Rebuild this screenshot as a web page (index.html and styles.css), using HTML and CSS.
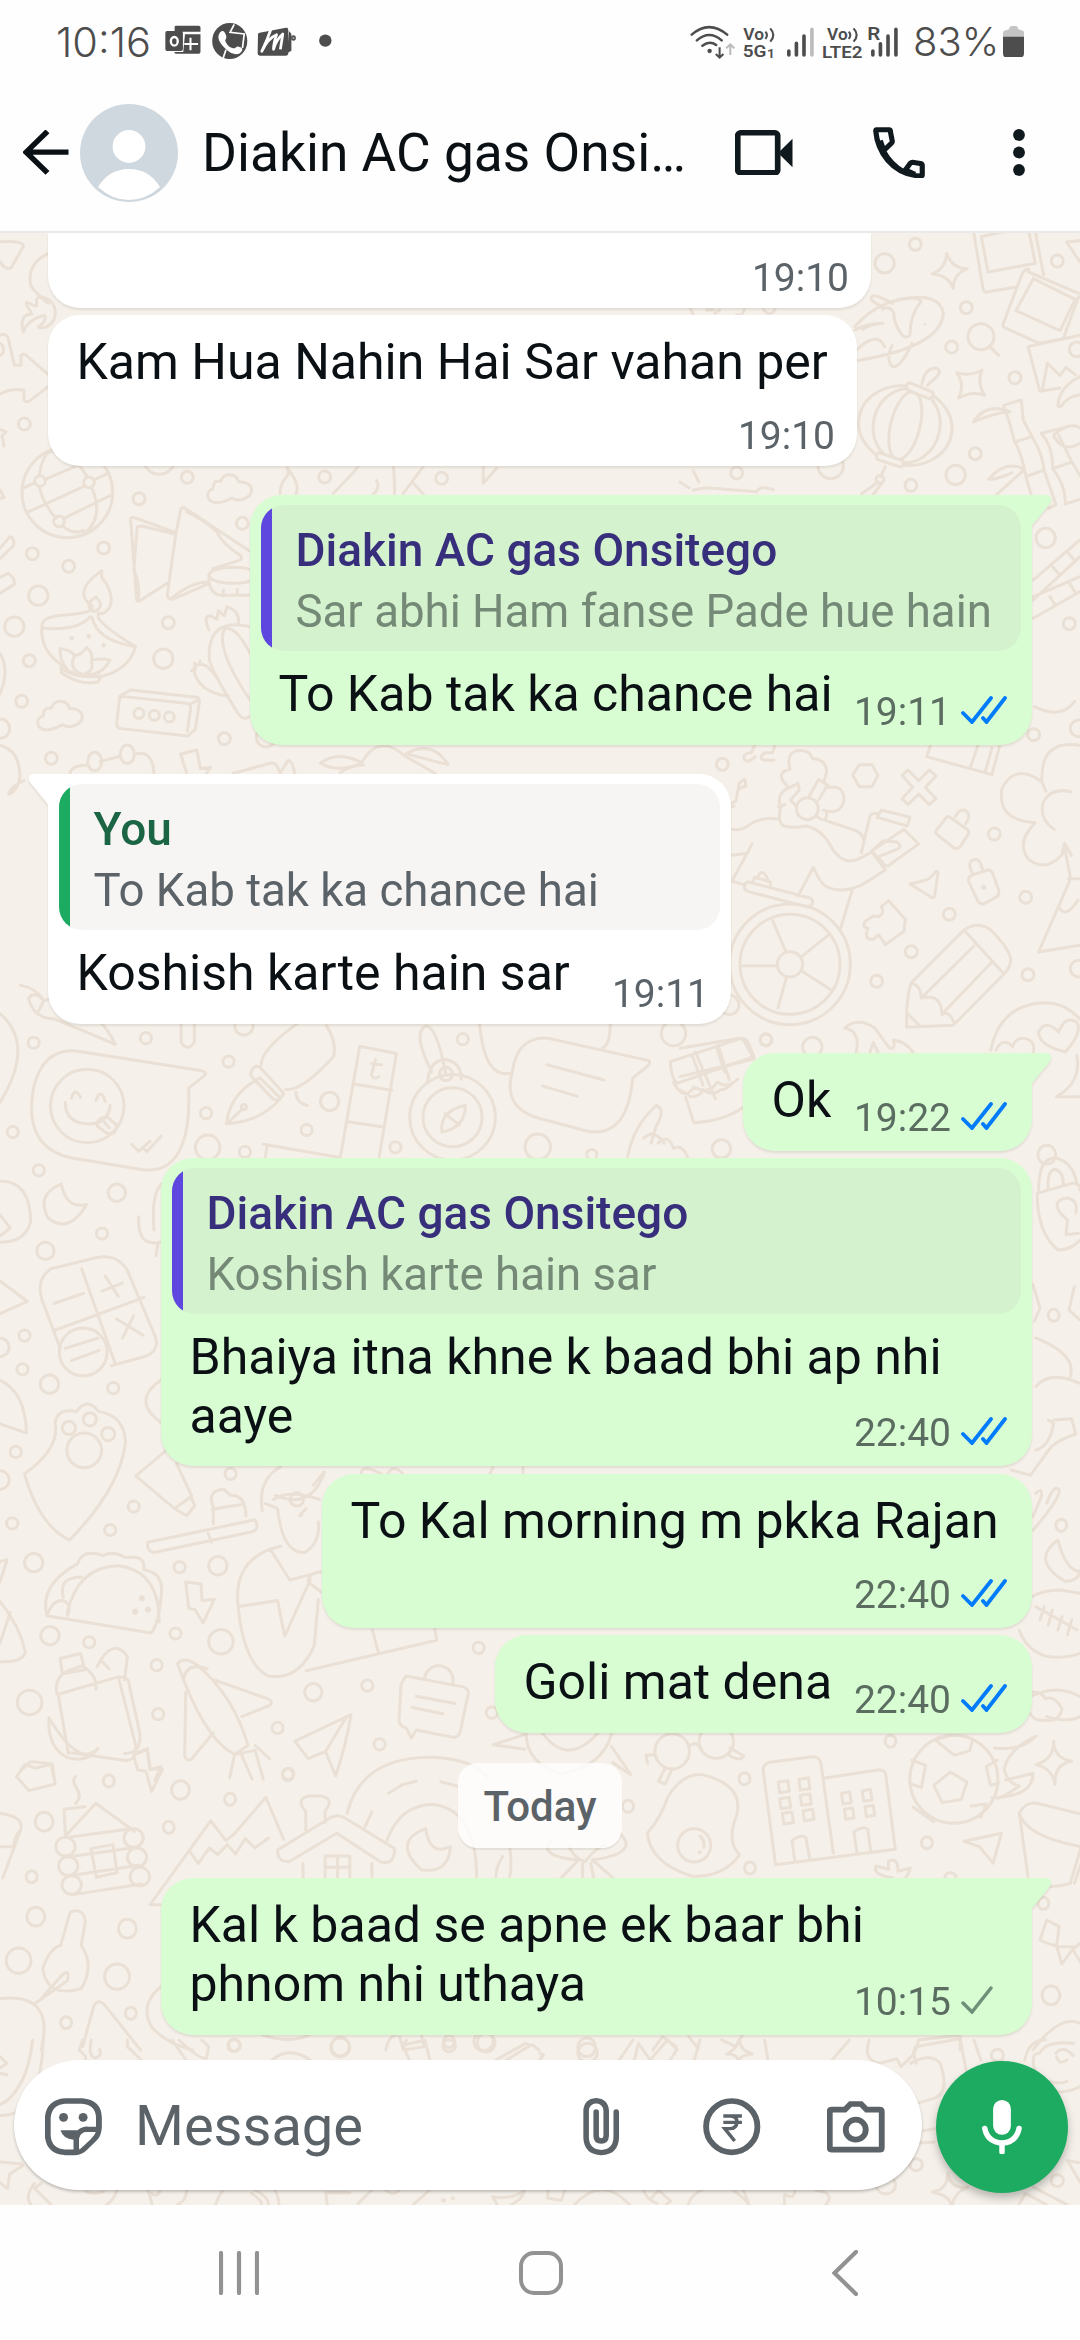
FILE: index.html
```html
<!DOCTYPE html>
<html lang="en">
<head>
<meta charset="utf-8">
<title>Diakin AC gas Onsitego</title>
<link rel="stylesheet" href="styles.css">
</head>
<body>
<svg class="defs" width="0" height="0">
  <symbol id="read" viewBox="0 0 46 28"><path d="M2 17l9 9L30 2M22 22l3.500 4L44 2" fill="none" stroke="#007bfc" stroke-width="3.800" stroke-linecap="round"/></symbol>
  <symbol id="sent" viewBox="0 0 46 28"><path d="M2 17l9 9L30 2" fill="none" stroke="#6f8f78" stroke-width="3.500" stroke-linecap="round"/></symbol>
</svg>
<div class="status">
  <span class="clock">10:16</span>
  <svg class="notif" viewBox="478 70 484 110" preserveAspectRatio="none" fill="#4d4d4d">
    <path d="M506 82q0-4 4-4h66q5 0 5 5v13h-75zM536 104h45v52q0 6-5 6h-66q-5 0-5-5h26zM484 94h40q6 0 6 6v48q0 6-6 6h-40q-5 0-5-6v-48q0-6 5-6z"/>
    <g fill="none" stroke="#fff" stroke-width="7"><ellipse cx="505" cy="125" rx="10" ry="13"/><path d="M552 114v38M534 133h40" stroke-width="6"/></g>
    <ellipse cx="666" cy="124" rx="51" ry="54"/>
    <path d="M638 98c8-8 12-4 17 8 4 11-4 13-1 20 5 12 12 17 22 20 7 2 8-7 16-5 14 4 12 9 7 16-8 11-28 8-44-8-20-20-28-36-17-51z" fill="#fff"/>
    <path d="M679 74l-12 24 41 5-5 42M655 150l-8 25" fill="none" stroke="#fff" stroke-width="5"/>
    <path d="M748 104q0-5 5-5l76-15q7-1 7 6v70q0 8-8 8h-73q-8 0-8-8zM838 94l7 9v50l-11 7z"/>
    <ellipse cx="851" cy="115" rx="7" ry="8"/><circle cx="851" cy="115" r="3" fill="#aaa"/>
    <path d="M788 82q-12 36-29 73 18-40 43-50-9 26-9 44 8-29 27-46l-7 46" fill="none" stroke="#fff" stroke-width="8" stroke-linejoin="round"/>
    <ellipse cx="943.500" cy="123" rx="18" ry="18.500"/>
  </svg>
  <svg class="signals" viewBox="436 70 606 108" preserveAspectRatio="none" fill="#4d4d4d">
    <g fill="none" stroke="#4d4d4d" stroke-width="7.500" stroke-linecap="round"><path d="M441 102q50-45 103 0M456 119q36-32 72 0M472 135q21-16 40-2"/></g>
    <circle cx="493" cy="151" r="6.500"/>
    <path d="M522 140v28M511 160l11 11 11-11" fill="none" stroke="#4d4d4d" stroke-width="6"/>
    <path d="M553 163v-28M541 143l12-12 12 12" fill="none" stroke="#bbb" stroke-width="6"/>
    <g font-family="Roboto" font-weight="600">
      <text x="591" y="119" font-size="52" textLength="60" lengthAdjust="spacingAndGlyphs">Vo</text>
      <text x="589" y="170" font-size="51" textLength="69" lengthAdjust="spacingAndGlyphs">5G</text>
      <text x="660" y="171" font-size="37" textLength="23" lengthAdjust="spacingAndGlyphs">1</text>
      <text x="834" y="119" font-size="52" textLength="60" lengthAdjust="spacingAndGlyphs">Vo</text>
      <text x="819" y="171" font-size="52" textLength="118" lengthAdjust="spacingAndGlyphs">LTE2</text>
      <text x="951" y="119" font-size="54" textLength="38" lengthAdjust="spacingAndGlyphs">R</text>
    </g>
    <path d="M655 93q9 10 0 22M669 83q18 20 0 40M897 93q9 10 0 22M911 83q18 20 0 40" fill="none" stroke="#4d4d4d" stroke-width="6"/>
    <g stroke="#4d4d4d" stroke-width="10.500" stroke-linecap="round"><path d="M723 151v12M745 128v35M767 106v57M967 151v12M989 129v34M1011 106v57M1034 86v77"/><path d="M790 86v77" stroke="#bbb"/></g>
  </svg>
  <span class="percent">83%</span>
  <svg class="battery" viewBox="0 0 62 94" preserveAspectRatio="none"><path d="M0 18q3-6 12-6 6 0 7-7 2-5 8-5h10q6 0 7 6t8 6q8 0 10 6v16H0z" fill="#c4c4c4"/><path d="M0 32h62v50q0 12-12 12H12Q0 94 0 82z" fill="#4d4d4d"/></svg>
</div>
<header class="header">
  <svg class="back" viewBox="68 392 132 133" preserveAspectRatio="none"><path d="M200 458.500H80M139 396L77 458.500l62 62.500" fill="none" stroke="#0a1014" stroke-width="16"/></svg>
  <svg class="avatar" viewBox="0 0 98 98"><circle cx="49" cy="49" r="49" fill="#cfd8df"/><circle cx="49" cy="42.500" r="16.400" fill="#fff"/><path d="M18 83Q29 65 49 65t31 18Q66 96 49 96T18 83z" fill="#fff"/></svg>
  <h1 class="title">Diakin AC gas Onsi…</h1>
  <svg class="video" viewBox="565 393 167 137" preserveAspectRatio="none"><rect x="573" y="401.500" width="116" height="120" rx="8" fill="none" stroke="#10191d" stroke-width="16.500"/><path d="M696 456l36-37v86l-36-37z" fill="#10191d"/></svg>
  <svg class="phone" viewBox="966 384 151 155" preserveAspectRatio="none"><path d="M976 392h37q3 0 3 3l6 32q0 3-2 5l-24 24q22 42 60 63l18-26q3-3 7-3l26 4q2 1 2 4v30q0 3-4 3-58-2-97-48-30-38-34-87 0-4 2-4zM996 450l-9-25M1062 514l26 12" fill="none" stroke="#10191d" stroke-width="15"/></svg>
  <svg class="dots" viewBox="0 0 12 47" fill="#10191d"><circle cx="6" cy="6" r="5.900"/><circle cx="6" cy="23.500" r="5.900"/><circle cx="6" cy="41" r="5.900"/></svg>
</header>
<main class="chat">
  <svg class="wallpaper" viewBox="0 233 1080 1972">
    <!-- upper left: globe, notebook, diya, cassette, vegetables -->
    <g transform="translate(0 300) scale(.3333)">
      <path d="M70 95c-10-30 0-55 25-52-6-20-20-22-15-36 20 5 20 15 30 10 0-18-5-30 20-25 30 8 45 40 30 70-10 18-30 24-45 20 12-10 25-25 20-35-15 0-50 12-65 48zM0 106q20-8 25 10l18 80h20v-30q8-6 16 0l80 70q6 8-4 16l-65 50q-12 8-18-2v-30q-40-6-72 12M0 130q14 10 10 24-4 12-10 12M0 388l18 8-12 12 6 30M0 570l12 22-12 4"/>
      <circle cx="202" cy="577" r="136"/><path d="M160 455q-30-5-42 70M118 560q10 50 50 95M190 680q30 25 60 12M75 562l30-14M135 538l105-45M80 638l170-78M282 540l45-22M190 656l142-70M190 450q50 40 72 82M275 562q40 90-25 142"/>
      <circle cx="120" cy="543" r="16"/><circle cx="267" cy="547" r="16"/><circle cx="177" cy="664" r="16"/>
      <path d="M392 660q-2-12 14-6l122 44-26 186q0 14 16 14l110-48M392 660l18 240q2 6 10 2l82-52M412 680l14-2 100 25M412 680q-6 60-10 130M402 810q20 50 12 88M528 698l14-68q2-10 12-6l196 130M560 635q60 30 90 60 20 40 72 72 6 10-4 14l-80 25M513 896q60-50 112-50"/>
      <ellipse cx="700" cy="826" rx="73" ry="24"/><path d="M627 826v22q8 38 40 38h90M670 870v18M712 868v18"/>
      <path d="M305 832q34 40 28 80-14 34-38 28v14q20 30 112 86-20 70-105 90l-8 16q-50 12-110-28v-24q-66-44-58-120 4-24 60-28 60-4 85-14 8-4 4-16-60-40 30-104zM282 935q-34-20 6-44 30 30-6 44zM132 985q100 8 138-34M276 952q14 70 130 88M186 1106q40 32 120 22M180 1046q30 2 44 20 16 2 36-24 22 20 14 40 24-8 56-2-18 36-50 42l-42 2-32-10q-28-30-26-68zM224 1066q-20 40 20 56M274 1082q10 30-20 40"/>
      <g class="solid"><circle cx="215" cy="1015" r="7"/><circle cx="266" cy="1009" r="7"/><circle cx="311" cy="1036" r="7"/></g>
      <path d="M358 1190l34-20 198 22q10 2 8 16l-12 80-22 20-200-22q-14-2-14-14l8-72q2-12 16-10l184 20q16 2 14 14l-10 70M572 1212l22-12"/>
      <circle cx="417" cy="1240" r="15"/><circle cx="463" cy="1246" r="15"/><circle cx="508" cy="1251" r="15"/>
      <path d="M646 608c-30-4-28-36-8-40 6-30 10-24 24-24 8-26 46-28 54 2 44-4 54 40 12 52q-16 6-32-4-30 16-50 14zM138 1290c-30-4-34-36-8-42 0-22 8-24 24-24 8-26 46-28 54 2 44-4 54 40 12 52q-16 6-32-4-30 16-50 16z"/>
      <path d="M627 990q-20-44 6-42l18 10 4-26 18 16 8-28q40 14 34 52M750 980q-130-30-122 100 10 40 86 160 16 24 34 10M750 1060q-40-80-76-76-30 60 76 216M686 1188q-90-10-106-80 10-20 30-14 16 4 46 46M574 1112l12-2-2-20M600 1094v-12"/>
      <path d="M210 1420q6-24 50-24M300 1385l60-16M404 1362q54-14 58 58M0 745l30-35q16 6 10 28L0 776M0 832l24-12q24 16 18 34L0 880"/><ellipse cx="284" cy="1385" rx="21" ry="28"/><ellipse cx="382" cy="1363" rx="21" ry="28"/>
      <path d="M560 1420l-18-58 48-12 12 56 30-4-14 20M700 1420l110-30q20-6 30 30l24-38q14 0 20 38M0 1060q30 50 0 122M0 1336q60 16 60 96-10 46-34 50 8-26 46-40M1085 1390q-70 30-124 0 50-40 124-2 50-90 130-20l90 52M1090 1395q-40 0-70 24M1220 1360q80-40 124 34-40-10-116-30M840 580q0-30 24-56 2-12-2-20 40 50 26 78M1000 580q60-60 74-80M1130 542q12 20-10 40M1180 500q4 30 4 82M1210 580l60-80M1240 550l30 32M1450 500v50l40-45"/>
      <circle cx="73" cy="372" r="18"/><circle cx="562" cy="532" r="18"/><circle cx="417" cy="596" r="18"/><circle cx="727" cy="670" r="18"/><circle cx="97" cy="761" r="18"/><circle cx="206" cy="799" r="18"/><circle cx="311" cy="744" r="18"/><circle cx="115" cy="887" r="29"/><circle cx="43" cy="980" r="29"/><circle cx="505" cy="968" r="18"/><circle cx="490" cy="1076" r="29"/><circle cx="88" cy="1082" r="18"/><circle cx="65" cy="1204" r="18"/><circle cx="673" cy="1316" r="18"/><circle cx="154" cy="1375" r="18"/><circle cx="0" cy="1286" r="29"/><circle cx="798" cy="1312" r="29"/><circle cx="974" cy="531" r="18"/><circle cx="1325" cy="535" r="18"/><circle cx="478" cy="475" r="48"/>
    </g>
    <g transform="translate(0 230) scale(.6887 .3333)"><path d="M0 35q34-4 34 14l-18 65q-10 6-16-20M70 70q-30 30-26 90 2 20 26 60"/></g>
    <!-- upper right: photos, fish, lantern, bamboo -->
    <g transform="translate(680 230) scale(.3333)">
      <path d="M880 0l30 180q2 8 10 6l85-14M1065 0l26 134M904 20l20 106 142-26-20-100M904 20l80-18M1046 126l150 64M1046 118q-14-2-22 20l-54 142q-4 12 10 16l98 44 70-14M1060 146l126 62-46 94-132-60zM1196 200l-44 120M1044 350l156-34M1044 350l36 134 60-10M1088 476l14-76 38 36 18-24 28 22M1200 440q-60 30-66 84 0 10 10 4 20-30 56-34"/>
      <path d="M800 70q16 46 62 46-44 18-42 60-16-42-64-44 42-16 44-62zM830 428q40 12 76-8-16 38 8 76-40-14-78 8 20-40-6-76z"/>
      <path d="M524 290q80-90 200-88 60 4 66 50-10 100-260 140M524 300q40-20 84-20-40 4-60 18M610 230q-50-20-32-32 10-4 60 22M640 214q70-18 84 0-34 40-34 100-14 16-28-4-24-40-20-60-14-26-34-12M696 340q-34 74-58 70-22-20-2-64M530 360q60-60 84-10"/>
      <circle cx="903" cy="320" r="39"/><path d="M930 350l26 26"/>
      <ellipse cx="676" cy="587" rx="141" ry="118" transform="rotate(12 676 587)"/><ellipse cx="680" cy="587" rx="100" ry="112" transform="rotate(14 680 587)"/><ellipse cx="676" cy="587" rx="44" ry="104" transform="rotate(14 676 587)"/><path class="paper" d="M688 458l70 28q6 14-10 20l-66-26q-8-14 6-22zM596 668l72 24q6 10-4 20l-72-24q-6-12 4-20z"/><path d="M726 462q8-46 40-48 20 6 8 22-10 12-32 30M616 710l-14 30M594 756l-50 36M606 758l-26 36"/><circle cx="600" cy="748" r="12"/>
      <path d="M970 526l54-16 6 60 26 50-52 16-16-60-18-50zM1004 636q20 30 34 104l54-20q-4-50-36-100M1038 740l26 90M1092 720l36 104-22 12M880 576q40-60 110-30-40 0-110 30zM926 748q50-60 108-30l-84 76M926 748q30 0 70-20M1084 610l80-20M1084 610q36 40 34 106l58-20-40-80M1118 716q40 50 38 106l44-14M1176 696l24 40M1122 614q50-40 78-20M1122 620q30 50 78 20"/>
      <path d="M1060 1050l140-120M1060 1110l140-130M1060 1165l140-80M1060 1100l140-60M1118 1010l20 24M1165 970l20 22M1110 1100l16 26M1170 1062l16 26"/>
      <path d="M1160 36l40-4M1160 36l40 60M30 234l10 20M80 240l20 0M105 250l14-10M170 254q20 6 24-20M40 780q30-8 60-5l130 10q10-20 50-6M0 756l28 18M40 722l16 34"/>
      <circle cx="706" cy="43" r="18"/><circle cx="614" cy="100" r="29"/><circle cx="859" cy="233" r="18"/><circle cx="815" cy="351" r="18"/><circle cx="1005" cy="443" r="18"/><circle cx="1132" cy="93" r="18"/><circle cx="886" cy="671" r="18"/><circle cx="827" cy="735" r="29"/><circle cx="693" cy="766" r="18"/><circle cx="452" cy="708" r="38"/><circle cx="170" cy="729" r="18"/><circle cx="1097" cy="924" r="29"/><circle cx="1168" cy="1181" r="18"/><circle cx="1190" cy="358" r="22"/><circle cx="268" cy="232" r="18"/>
      <g class="solid"><circle cx="735" cy="283" r="4"/></g>
    </g>
    <!-- middle right: wheelchair rider, pencil, locks, tree -->
    <g transform="translate(680 700) scale(.3333)">
      <circle cx="330" cy="793" r="181"/><circle cx="330" cy="793" r="150"/><circle cx="330" cy="793" r="38"/>
      <path d="M186 797h106M278 662l40 94M362 772l82-66M364 812l86 56M320 830l-26 94"/>
      <path d="M206 546l184 48q12 6 6 18-6 12-18 8l-176-46q-12-6-8-18 4-10 12-10zM218 546l6-14 48 14-2 14M232 532q16-32 32 8M155 388q30 6 60-18 30-20 84-12M302 320q-10 50 10 58 30 8 66 0 50 10 80 70 34 50 80 28l38-20 40 54q-30 20-70 44-60 30-110 4-20-16-36-56l-46 86M216 432l-60 112 36 10M155 466l48-6M516 572l-36 120M544 458l26-110q4-8 20-8M438 362l90 30q26 12 24 40M604 330l86 22-8 26-90-26zM576 452l96-64 44 44-92 66q-10 2-14-8l-36-38M596 470l60-24q10-10-6-20l-40-4-34 30"/>
      <path d="M302 320q-12-30 12-50l40-20 4 20-26 30 14 16M322 258q-40-40 8-50-16-60 40-56 20 2 28 24 40 0 42 40-4 14-8 30M386 292l30-54 26 18-26 44M446 262q46-8 46 38-10 48-62 30M412 350q30 26 28-18M295 320l20-6"/><circle cx="382" cy="326" r="33"/>
      <path d="M194 180q-10-20 20-22l12-26M282 180q-60 6-28-22h24l8-26M226 170q-24 22-32 8M162 318q-12 6-10-6l16-10 10-54 16-10 4 20-20 8"/>
      <path d="M538 194h38l18 32-18 34h-38l-20-34zM666 226l18-16 32 32 32-32 20 18-32 34 32 34-20 18-32-32-32 32-18-18 32-34zM808 350l56 40q6 6 0 14l-24 38q-10 6-18 2l-50-40q-8-6-2-14l28-36q4-6 10-4zM826 350q14-28 34-16 14 16-4 38M880 524l44-14q10 0 14 10l18 50q4 18-12 24l-34 18q-14 0-18-12l-26-56q-4-14 14-20zM878 522q-20-40 8-44 16 0 22 34M690 552q34-8 52-14 12-6 26-24 4-2 6 4l-10 70q-2 8-10 4zM556 664l24-16 16 2q20-10 8-30l22-18 50 56-4 36-56 40-20-30-16 14q-30 4-16-34-20 0-8-20z"/>
      <path d="M694 848l156-156q40-30 80-4 60 60 62 90 2 20-20 44L820 976l-140 6v-50q4-60 14-84zM852 690l118 130M882 738L724 894M936 786L786 942M694 848q30 10 30 46 60-16 62 50 20-16 38 28M682 940l40 40"/>
      <path d="M1200 136q-120-20-114 110l12 28M1086 246q-80-60-120 20-16 96 100 102-60 60-20 110 50 40 100-14l8-34 20 36M1174 276q-60-16-84 30-14 50 32 82M1152 432l20 104-96 220 124-20M1166 536h34M1136 620q20 40 58-20M740 170l196 54 24-90M740 170l12-36M870 206l24-70M916 214l20-70M1064 20q80 40 120-16"/>
      <path d="M932 1050q30-140 166-142 60 2 102 50M948 1050q20-40 50-10 10-30 40-24 30 10 22 40M1156 1056q-80-20-80-60 20-40 60 0 20-50 54-30 20 30-34 90zM1190 1066q16 80-60 124h70M494 984q40-34 90 0l44 60q20 6 12-24 40 6 60 38M494 984q50 10 34 74M570 1056l10-28 14 28"/>
      <path d="M0 1045l180-30q8 2 14 12l28 50L0 1130M46 1056l60 140M114 1036l34 104M0 1170q30 16 30 20 30 0 40-20 30 20 50 0 20 0 36-20"/>
      <circle cx="127" cy="193" r="18"/><circle cx="943" cy="402" r="18"/><circle cx="1037" cy="592" r="18"/><circle cx="808" cy="643" r="18"/><circle cx="694" cy="755" r="18"/><circle cx="590" cy="844" r="18"/><circle cx="1044" cy="824" r="18"/><circle cx="258" cy="1020" r="18"/><circle cx="397" cy="1041" r="29"/><circle cx="1061" cy="104" r="18"/><circle cx="1196" cy="85" r="25"/><circle cx="1196" cy="806" r="25"/><circle cx="148" cy="915" r="29"/>
      <g class="solid"><circle cx="911" cy="562" r="8"/></g>
    </g>
    <!-- centre left: smile bubble, pen, compass, calculator, paw, taco -->
    <g transform="translate(0 980) scale(.5102)">
      <path d="M66 210q20-80 90-70l240 38q12 4 4 10l-30 24q6 170-90 160l-120-20q-118-12-94-142zM258 322l14 14 22-20M280 330l8 6 28-30"/><circle cx="171" cy="247" r="72"/><path d="M128 240q0 40 44 42 40 0 44-36M140 232q6-24 18-2M188 236q10-26 18 2M190 286q0-16 20-18l18 16q2 18-16 18zM204 278l10 12"/>
      <path d="M444 282q6-60 66-90l40 40q-40 46-106 50zM444 282l30-28M492 180q10-20 22-4l42 46q-10 20-22 10l-42-44zM512 166q0-30 70-80M560 214q30 6 94-64 6-30-14-60M580 220q0 20 22 26"/><circle cx="478" cy="249" r="5"/>
      <path d="M705 130l72 14-34 204M705 130l-38 218M694 204l74 12M682 278l70 10M516 322l150 26M520 348l4-26M728 164l20 2M736 156l-8 30q4 10 14 4"/>
      <circle cx="887" cy="269" r="84"/><circle cx="887" cy="269" r="58"/><path d="M838 200q4-44 36-44 30 6 30 38M846 180q-40-80-10-90 20 2 38 94M912 246q-50 10-46 52 46-8 46-52zM872 262l28 22"/><circle cx="874" cy="184" r="13"/>
      <path d="M1004 180q10-70 70-66l198 44q4 6-4 12l-28 22q-10 120-90 104l-90-24q-76-20-56-92zM1072 166l112 30M1064 208l68 20M940 86q10 110 62 96M1196 86q0 40-14 46M1314 160l140-46q8 0 12 8l12 28-150 52q-12-6-14-42zM1356 146l22 60M1404 130l16 50M1320 200q20 40 40 10 30 16 46-10 20 14 40-6M1344 230l16 50q60-4 96-30M1230 348q10-60 56-102 20 6 0 40l-10 34M1262 310q20-20 40 10M1290 320q20-20 30 10M1320 330q16-10 28 18"/>
      <path d="M40 10q30 6 46 30 30-10 60 0 60 40 80 86-60-26-120-50-40 0-50-40 10-16 30 4l-10 20M355 86v36q12 20 26 0V86"/>
      <path d="M120 400q-50 20-26 66 40 34 76-26-40 10-50-40z"/>
      <path d="M100 566l90-22q40-8 60 26l54 128q10 30-20 40l-66 18M100 566q-30 20-18 60l36 96M160 566l66 186M104 688l178-66M106 634l58-20M206 580l26 40M200 610l40-16M228 664l52 32M240 702l22-44"/><circle cx="163" cy="729" r="47"/><path d="M128 722l64-20M140 746l54-20"/>
      <path d="M48 968q70-50 60-100 4-30 42-22 20-30 44 0 50 8 52 60-10 90-110 192-60-30-88-130z"/><circle cx="165" cy="922" r="34"/><circle cx="135" cy="878" r="13"/><circle cx="176" cy="861" r="13"/><circle cx="212" cy="890" r="13"/>
      <path d="M266 972l60-50M266 972l76 64 34-24-30-64M342 1036l24 14 16-20-8-16M290 1102l210-44q10 20-8 24l-190 40q-16-4-12-20zM408 1084l6 18M418 1066v-34q-14-30 20-34l14 12q30 0 30 40M416 1038q40-8 60-10M514 1040q-10-60 36-86M520 1026l24 10q10 90 54 86 30-20 26-60M536 1018q30-20 90 0M540 1010q70 30 96-46M600 1036q-20 20-8 12M634 966l-20 24"/><circle cx="582" cy="1018" r="13"/>
      <path d="M92 1246q-16-60 60-102 10-30 50-16 20-10 44 4 40-6 36 24 40 6 34 50-6 60-20 74L92 1246zM132 1240q20-90 100-92 80 10 80 110M92 1246q10-30 30-30 20 6 10 30M124 1210q-10-40 36-40"/><g class="solid"><circle cx="278" cy="1212" r="6"/><circle cx="290" cy="1234" r="6"/><circle cx="265" cy="1238" r="6"/></g>
      <path d="M364 1180l30 4 2 32 24-2-22 46-16-26-12-2zM468 1228l76-12 14 70 50-110M550 1110q-90 20-84 110 10 120 60 144 60 10 90-60l8-90M530 1116l38 60 60-16M600 1354l256-60-4-24M730 1274l12 46M630 1200l-26-20q0-20 30-20M0 1218q40 50 50 100-6 20-50 18M0 1300l20-60M0 784q50 24 52 104L0 870M0 590l54 40-54 24M0 394q60 0 60 80-10 40-60 40M0 460l20 26-20 16M0 66q70 60 0 174M0 1140l14-4-14 44M272 464q-4 60 44 50M310 514l-4 26M316 400q-20 20-14 90M316 784q-60 40 0 84"/>
      <circle cx="860" cy="1372" r="28"/><path class="paper" d="M786 1380l10-16 114 22q8 4 8 12l-16 76q-4 12-16 10l-70-14-10 16-10-20q-14-4-14-16zM816 1404l76 14M808 1426l60 12"/>
      <path d="M578 1492l110-52q-10 60-30 120l-20-48-34 14zM638 1512l40-66M348 1340q12-16 40 4 70 60 98 156l-26 18q-60-30-112-178zM360 1370q6-34 46-20M420 1372l108 38q8 6 0 12l-54 22M364 1396l-2 126q6 12 14 4l42-50M460 1518l-10 46M460 1518l40-8 16 56M500 1500l28 26M474 1520l20 46M118 1330l40-10 8 32-44 8zM112 1400q-8-30 20-46l30-10q30 20 26 46M114 1400l20 116M114 1400l118-34 34 134q2 30-20 30l-112-16M232 1366q20 0 20 10l22 100q4 40-30 40M190 1346q30-60 60-20l-6 46M200 1336l14 14M96 1446q60 100 96 60-20 30-60 18-40-20-36-78zM264 1516l24-8 6 40 22-6-12 26M40 1550l20-18 40 4 6 30"/>
      <path d="M748 968q-40-20-40 0M790 968q-20-20-30 0M960 968l6-12M1025 968v-12"/>
      <circle cx="66" cy="123" r="11"/><circle cx="286" cy="114" r="11"/><circle cx="448" cy="160" r="11"/><circle cx="646" cy="238" r="18"/><circle cx="404" cy="261" r="11"/><circle cx="25" cy="298" r="11"/><circle cx="407" cy="328" r="24"/><circle cx="480" cy="337" r="11"/><circle cx="601" cy="294" r="11"/><circle cx="775" cy="328" r="11"/><circle cx="907" cy="116" r="11"/><circle cx="1054" cy="327" r="25"/><circle cx="1160" cy="342" r="10"/><circle cx="1320" cy="105" r="24"/><circle cx="1501" cy="117" r="11"/><circle cx="1414" cy="331" r="18"/><circle cx="76" cy="373" r="11"/><circle cx="229" cy="417" r="17"/><circle cx="200" cy="497" r="11"/><circle cx="89" cy="531" r="17"/><circle cx="48" cy="697" r="11"/><circle cx="0" cy="720" r="18"/><circle cx="44" cy="763" r="11"/><circle cx="97" cy="792" r="18"/><circle cx="222" cy="800" r="11"/><circle cx="31" cy="925" r="11"/><circle cx="0" cy="980" r="18"/><circle cx="24" cy="1065" r="11"/><circle cx="262" cy="1032" r="11"/><circle cx="452" cy="968" r="11"/><circle cx="216" cy="1078" r="11"/><circle cx="66" cy="1142" r="18"/><circle cx="352" cy="1151" r="11"/><circle cx="427" cy="1148" r="18"/><circle cx="344" cy="1281" r="11"/><circle cx="98" cy="1285" r="18"/><circle cx="175" cy="1298" r="11"/><circle cx="433" cy="1297" r="24"/><circle cx="307" cy="1343" r="11"/><circle cx="58" cy="1416" r="24"/><circle cx="310" cy="1439" r="11"/><circle cx="614" cy="1396" r="17"/><circle cx="720" cy="1383" r="11"/><circle cx="938" cy="1309" r="11"/><circle cx="544" cy="1466" r="11"/><circle cx="744" cy="1498" r="11"/><circle cx="565" cy="1556" r="11"/><circle cx="964" cy="1436" r="11"/><circle cx="478" cy="90" r="18"/>
    </g>
    <!-- lower: house, rainbow, bird, egg, buildings, football, key -->
    <g transform="translate(0 1600) scale(.6887 .3333)">
      <path d="M716 434l46-30M716 434l46 14M888 440l28 84-26-36M764 400q0 90 50 122 60-20 74-120M788 400q36 100 80 0M504 640q20-170 124-168 60 6 80 60M564 580l20-26 20-10M640 545l24 14M562 720q20-110 70-106 60 20 60 218M740 832q4-40 0-90M730 770q-10 30-10 60M530 680l10-44M618 686q-50 40-6 124 40 10 42-70-30 30-36-54z"/>
      <path d="M403 750l76-96q10-14 22 0l72 92q0 50-20 40l-64-86-68 84q-18 6-18-34zM440 790v44M540 790v44M472 834v-66h36v66M490 768v66M472 802h36M444 690v-56q-16-36 4-46h20q18 12 4 44v36M218 914l88-252 22 60 12-20 46-110 26 126M218 914h20M276 756l12 34 16-46 12 20 14-30 12 28 14-46 14 28 20-30"/>
      <path d="M95 708l44-98 56 84M95 708l-2-80 30-8M110 610q10-20 0-50-6-20 0-30M100 712l90-26M100 770l90-26M106 826l96-30M106 884l100-32M132 746l32-12 6 84-30 14z"/><ellipse cx="95" cy="740" rx="14" ry="28"/><ellipse cx="99" cy="798" rx="14" ry="28"/><ellipse cx="104" cy="855" rx="14" ry="28"/><ellipse cx="194" cy="714" rx="14" ry="28"/><ellipse cx="199" cy="772" rx="14" ry="28"/><ellipse cx="203" cy="830" rx="14" ry="28"/>
      <path d="M24 530l12-36 16 10 24-12 4 60-38 20zM194 466l20-20 4 60 18 2-16 66-8-60-12-4zM0 640q36 10 30 50-10 20-10 50H0M30 690L4 834"/>
      <path d="M102 936q20-14 22 30l-6 70q20 60 0 130-50 30-56-60 10-60 26-70zM88 1130q14-30 10 12l-48 70M88 1130l-30 70M0 1196q80-20 60 154M120 1340l16-120q6-30 18 0l50 130M240 1150q-40 60-20 130 20 50 60 70M380 1304q40 30 70 0M580 1310l6 40 30-10-4-34M948 1350l14-40 20 30M1000 1310l14 36M1048 1320l20 20 10-34M1330 1350l4-30 60-14v44M1500 1350q40-110 68-80M560 1350q4-40 14-44"/>
      <ellipse cx="976" cy="454" rx="25" ry="53"/><ellipse cx="1040" cy="425" rx="25" ry="50"/><path d="M966 504l-10 40 10 8 10-46M1000 440q10-20 18 6M1060 444l20 24q-6 20-24-6M940 490l-2-24 12-2M940 700q20-50 30-110 20-70 50-66 60 30 50 120-16 80 4 120-24 70-70 64-60-40-64-128z"/><ellipse cx="1008" cy="736" rx="24" ry="50"/><path d="M1016 708q8 14 6 34"/>
      <path d="M1108 510q0-20 12-24l60-16q10 0 12 20l18 270M1108 510l18 284 174-46-14-226q-2-14-12-12l-76 24M1154 782l-4-60q12-20 20-10l6 66M1244 756l-4-60q14-20 20-8l4 62"/>
      <path d="M1130 546l14-4 2 32-14 4zM1160 538l14-4 2 32-14 4zM1132 596l14-4 2 30-14 4zM1162 586l14-4 2 30-14 4zM1136 640l14-4 2 32-14 4zM1166 632l14-4 2 30-14 4zM1222 580l12-4 2 32-12 4zM1252 572l12-4 2 32-12 4zM1226 628l12-4 2 30-12 4zM1256 620l12-4 2 30-12 4z"/>
      <ellipse cx="1385" cy="538" rx="64" ry="132"/><path d="M1380 516l24 30-8 52-28 10-12-52zM1358 420l28 46 22-14 4-30M1358 420l22-14M1324 480l20 16-6 66-16-10M1326 622l30 44M1410 618l22-6-8 40M1448 480l-16 20 6 56 12-6M1444 444q40 10 60-36-40 40-46 100 4 40 22 50-20 30-30 36M1460 540l40-20q0 70-60 74M1530 424q0 50 26 60-26 10-24 70-4-50-28-60 26-14 26-70z"/>
      <path d="M1400 724l54-24-12 90-20-50zM1480 640q10-40 30-28l60 30M1480 640q10 70 90 100M1480 640l14 210q30 20 60 0l16-110M1560 850l10-60M1296 834q-30-10-24-36l18 10v-24q14-16 14 30l18-10q-6 36-12 36M1510 1020l10-60 18 20-4 60 26 0-18 52-8-54-16-10zM1568 1030l-10 20 12 40"/>
      <path d="M800 720q-20 50 40 60l-26 56M900 700q30 60-40 80l30 54M826 740q10 40 24 44 14-40 30-50M846 790v44M858 790l4 44"/>
      <g class="solid"><ellipse cx="1016" cy="757" rx="3" ry="6"/></g>
      <ellipse cx="158" cy="543" rx="8" ry="18"/><ellipse cx="262" cy="570" rx="13" ry="28"/><ellipse cx="334" cy="598" rx="8" ry="18"/><ellipse cx="418" cy="524" rx="8" ry="18"/><ellipse cx="64" cy="665" rx="13" ry="28"/><ellipse cx="245" cy="682" rx="8" ry="18"/><ellipse cx="46" cy="830" rx="8" ry="18"/><ellipse cx="52" cy="950" rx="13" ry="28"/><ellipse cx="185" cy="986" rx="13" ry="28"/><ellipse cx="27" cy="1082" rx="18" ry="38"/><ellipse cx="170" cy="1130" rx="18" ry="38"/><ellipse cx="190" cy="1240" rx="8" ry="18"/><ellipse cx="96" cy="1268" rx="8" ry="18"/><ellipse cx="912" cy="619" rx="8" ry="18"/><ellipse cx="1081" cy="536" rx="8" ry="18"/><ellipse cx="1293" cy="424" rx="8" ry="18"/><ellipse cx="1346" cy="728" rx="8" ry="18"/><ellipse cx="1089" cy="804" rx="8" ry="18"/><ellipse cx="1515" cy="910" rx="8" ry="18"/><ellipse cx="1526" cy="1186" rx="13" ry="28"/><ellipse cx="340" cy="1335" rx="8" ry="18"/><ellipse cx="494" cy="1340" rx="13" ry="28"/><ellipse cx="652" cy="1325" rx="8" ry="18"/><ellipse cx="706" cy="1328" rx="13" ry="28"/><ellipse cx="852" cy="1342" rx="13" ry="28"/><ellipse cx="1380" cy="832" rx="8" ry="14"/>
      <path d="M1496 290q40-40 72 0M1520 350q30 20 48 0M1496 340q6 24 18 20 24 10 28-34-10-40-24-30-6-22-22-20"/>
    </g>
    <!-- right margin beside the late-evening messages -->
    <g transform="translate(0 1150) scale(.6887 .3333)">
      <path d="M1508 120q0-96 24-96 26 10 32 80M1506 130l50-30q12-4 12 20M1506 130q0 120 30 170 20 0 32-30M1522 118q-2-56 10-60 12 6 12 46M1540 190q-14-40 10-46 16 6 12 44M1540 190l10 20-2 44 18-4M1500 404l10 70-8 40M1552 480l8-70M1552 480l16 30M1504 564q60 50 50 116M1504 710q20-50 64-10M1504 900q20-10 26-80l-8-10M1530 810l26-4 6 46q-30 20-40 50l-26 74-28-16M1504 1030q10-20 8 10l-12 60M1520 1060q10-60 18-40 0 30-38 120M1536 1170q-40 60 10 124 20 0 22-30-20 0-32-94zM1480 1410q4-90 60-90l28 10M1480 1440q10 60 40 80 30 6 48-10M1504 1370l60 70M1516 1370l-6 40M1528 1380l-6 46M1542 1400l-6 40M1556 1410l-6 44"/>
      <ellipse cx="1530" cy="496" rx="8" ry="18"/><ellipse cx="1541" cy="1126" rx="8" ry="18"/><ellipse cx="1520" cy="14" rx="13" ry="28"/>
    </g>
    <!-- strip behind the composer -->
    <g transform="translate(0 2040) scale(.3444 .3333)">
      <path d="M95 0q-10 80-30 120-30 60-65 74M125 0q0 120-50 190-30 40-75 36M0 50l20 20-20 14M0 100l20 4M240 0l-10 30 18 18v12M265 0q-10 50 12 54 20-6 12-26M370 0v20l40 40M500 0l40 60M520 0q60 60 80 54l6-34-20-20M790 60q50-44 110 0M1170 15l64-14 14 58M1180 0l-10 15 18 44M1440 60l86-50 14 6-70 44M1545 14l20 16M0 366l64 6q4 4 0 6l-36 24-6 44-22-18M100 430q-30 40-10 64M100 445l50 50M120 430l-20 15M250 455q20 10 50 0M340 450q-10 30-30 44M430 450l12 44M440 460q14 16 26-10M542 450q0 30-26 44M626 494q10-30 22-44M730 460q30 20 30 34M740 450q40 20 40 44M810 494q0-20-12-44M950 494l-4-36h70M1080 450l-40 40M1120 450q20 20 40 0M1200 494l48-44M1430 470q60 10 94-20-8 30-40 44M1430 470l14 24"/>
      <circle cx="680" cy="17" r="18"/><circle cx="988" cy="22" r="28"/><circle cx="1304" cy="17" r="18"/><circle cx="1404" cy="4" r="28"/><g class="solid"><circle cx="1288" cy="481" r="7"/><circle cx="1315" cy="475" r="6"/></g>
    </g>
    <g transform="translate(540 2040) scale(.3444 .3333)">
      <path d="M0 40l10 6-10 12M230 60l40-60M274 60l12-50 34 50 50-60 28 28-20 32M448 60l16-60M580 0q0 30 36 42-36 4-40 20-6-22-34-20 30-16 36-42M652 0l10 60M848 60l50-60M956 0q-20 60 30 70l50-14 12 24 40-40M1090 20l130-24 20 110M1090 20l-6 20 8 30M1076 70q60-34 86 0 30 90-20 106-70 20-92 30M1260 0l20 60M1408 60q10-60 60-60M1440 100q-20-60 10-60 20-40 100-30M1498 40q20-26 50 6M1500 50q6 26 30 10M1480 124q30 10 50 0M1440 120q50 60 128 20M1076 280l70-14M1090 310l54-4M1184 400q10 50 58 42-40 16-44 52M1184 400q0 50-46 56 50 10 56 38M1532 362l36 64M1532 362l36 6M1410 460l60 34M1430 440l100 54M1390 494l20-34M24 450l-2 24 40 8 10-32M100 494q80-90 160 0M300 450q10 30 40 40M324 474l20-24 36 34-14 10M430 494q10-30 40-44M560 450q40 30 46 44M590 450l14 34M740 450q0 30-30 14v30M800 450q60 10 30 44"/>
      <circle cx="138" cy="38" r="28"/><circle cx="1328" cy="46" r="18"/><circle cx="1092" cy="374" r="18"/><circle cx="1004" cy="434" r="28"/><circle cx="1502" cy="422" r="18"/>
    </g>
  </svg>
  <section class="messages">
    <article class="bubble in cut"><time class="meta">19:10</time></article>
    <article class="bubble in b2"><p class="text">Kam Hua Nahin Hai Sar vahan per</p><time class="meta">19:10</time></article>
    <article class="bubble out tail b3">
      <blockquote class="quote contact"><b class="name">Diakin AC gas Onsitego</b><span class="cite">Sar abhi Ham fanse Pade hue hain</span></blockquote>
      <p class="text">To Kab tak ka chance hai</p><time class="meta">19:11<svg class="tick"><use href="#read"/></svg></time>
    </article>
    <article class="bubble in tail b4">
      <blockquote class="quote self"><b class="name">You</b><span class="cite">To Kab tak ka chance hai</span></blockquote>
      <p class="text">Koshish karte hain sar</p><time class="meta">19:11</time>
    </article>
    <article class="bubble out tail b5"><p class="text">Ok</p><time class="meta">19:22<svg class="tick"><use href="#read"/></svg></time></article>
    <article class="bubble out b6">
      <blockquote class="quote contact"><b class="name">Diakin AC gas Onsitego</b><span class="cite">Koshish karte hain sar</span></blockquote>
      <p class="text">Bhaiya itna khne k baad bhi ap nhi<br>aaye</p><time class="meta">22:40<svg class="tick"><use href="#read"/></svg></time>
    </article>
    <article class="bubble out b7"><p class="text">To Kal morning m pkka Rajan</p><time class="meta">22:40<svg class="tick"><use href="#read"/></svg></time></article>
    <article class="bubble out b8"><p class="text">Goli mat dena</p><time class="meta">22:40<svg class="tick"><use href="#read"/></svg></time></article>
    <div class="day">Today</div>
    <article class="bubble out tail b9"><p class="text">Kal k baad se apne ek baar bhi<br>phnom nhi uthaya</p><time class="meta">10:15<svg class="tick"><use href="#sent"/></svg></time></article>
  </section>
  <div class="composer">
    <div class="field">
      <svg class="sticker" viewBox="129 175 166 172" preserveAspectRatio="none"><path d="M187 184h50q48 4 49 50v30q-2 22-12 32l-26 26q-14 15-32 16h-30q-46-4-49-50v-54q4-46 50-50z" fill="none" stroke="#5b6368" stroke-width="17"/><path d="M174 272h50q14-12 30-11h34v16h-38q-20 2-22 24v36h-16v-37q-30-2-38-28z" fill="#5b6368"/><path d="M229 330v-32q2-18 20-21h28q-4 10-18 25z" fill="#fff"/><circle cx="183" cy="233" r="13" fill="#5b6368"/><circle cx="240" cy="233" r="13" fill="#5b6368"/></svg>
      <span class="placeholder">Message</span>
      <svg class="clip" viewBox="122 172 104 172" preserveAspectRatio="none"><path d="M218 214v78q-2 42-43 44-42-2-44-44v-82q2-28 29-30 27 2 29 30v76q-1 15-14 15-15 0-15-15v-72" fill="none" stroke="#5b6368" stroke-width="16" stroke-linecap="round"/></svg>
      <svg class="rupee" viewBox="471 175 167 172" preserveAspectRatio="none"><ellipse cx="554.500" cy="261" rx="74.500" ry="77" fill="none" stroke="#5b6368" stroke-width="17"/><path d="M530 229h54M530 248h54M534 229h18q18 2 18 18-2 20-20 20h-16l29 37" fill="none" stroke="#5b6368" stroke-width="10"/></svg>
      <svg class="camera" viewBox="831 183 167 156" preserveAspectRatio="none"><path d="M845 209h38l16-17h31l16 17h38q6 0 6 6v108q0 6-6 6H845q-6 0-6-6V215q0-6 6-6z" fill="none" stroke="#5b6368" stroke-width="17"/><ellipse cx="914.500" cy="269" rx="29" ry="30" fill="none" stroke="#5b6368" stroke-width="17"/></svg>
    </div>
    <div class="mic"><svg viewBox="1283 175 117 164" preserveAspectRatio="none" fill="none" stroke="#fff"><path d="M1341.500 201v52" stroke-width="52" stroke-linecap="round"/><path d="M1291 260q8 42 50.500 44 42-2 50-44M1341.500 306v25" stroke-width="16" stroke-linecap="round"/></svg></div>
  </div>
</main>
<nav class="nav">
  <svg class="recents" viewBox="0 0 40 44"><path d="M2 2v40M20 2v40M38 2v40" stroke="#929292" stroke-width="4.200" stroke-linecap="round"/></svg>
  <svg class="home" viewBox="0 0 44 44"><rect x="2" y="2" width="40" height="40" rx="13" fill="none" stroke="#929292" stroke-width="4"/></svg>
  <svg class="goback" viewBox="0 0 26 46"><path d="M24 2L2.500 23 24 44" fill="none" stroke="#929292" stroke-width="4.200" stroke-linecap="round"/></svg>
</nav>
</body>
</html>
```
FILE: styles.css
```css
* { box-sizing: border-box; }
html, body { margin: 0; padding: 0; }
body {
  width: 1080px;
  height: 2340px;
  display: flex;
  flex-direction: column;
  overflow: hidden;
  background: #fefefe;
  color: #0a1014;
  font-family: Roboto, "Noto Sans", sans-serif;
}
svg { flex: none; display: block; }
.defs { position: absolute; }
p, h1, blockquote { margin: 0; }

/* status bar */
.status {
  flex: none;
  height: 74px;
  padding: 9px 0 0 56px;
  display: flex;
  align-items: center;
  color: #4d4d4d;
  font-family: Inter, sans-serif;
}
.clock { width: 109px; font-size: 41.500px; font-weight: 300; }
.notif { width: 166.700px; height: 36.700px; }
.signals { width: 208.700px; height: 36px; margin-left: auto; overflow: visible; }
.percent { width: 90px; margin-left: 14px; font-size: 40px; font-weight: 350; }
.battery { width: 21px; height: 31.500px; margin-right: 56px; }

/* conversation header */
.header {
  flex: none;
  height: 159px;
  padding-left: 23px;
  border-bottom: 2px solid #e9e9e9;
  display: flex;
  align-items: center;
}
.back { width: 45.500px; height: 44.300px; }
.avatar { width: 98px; height: 98px; margin-left: 11px; }
.title {
  width: 533px;
  margin-left: 24.500px;
  font-size: 53.300px;
  font-weight: 400;
  line-height: 62px;
  white-space: nowrap;
}
.video { width: 57.500px; height: 45.700px; }
.phone { width: 52px; height: 51.700px; margin-left: 80.500px; }
.dots { width: 12px; height: 47px; margin-left: 87.500px; }

/* chat */
.chat {
  position: relative;
  flex: none;
  height: 1972px;
  overflow: hidden;
  background: #f5f1ea;
}
.wallpaper {
  position: absolute;
  inset: 0;
  width: 1080px;
  height: 1972px;
  fill: none;
  stroke: #eae0d5;
  stroke-width: 3;
  stroke-linecap: round;
  stroke-linejoin: round;
}
.wallpaper * { vector-effect: non-scaling-stroke; }
.solid { fill: #eae0d5; stroke: none; }
.paper { fill: #f5f1ea; }
.messages {
  position: relative;
  padding: 0 48px;
  display: flex;
  flex-direction: column;
  align-items: flex-end;
}
.bubble {
  position: relative;
  display: grid;
  grid-template-rows: auto 1fr;
  border-radius: 32px;
  filter: drop-shadow(0 2px 1px rgba(60, 50, 30, .11));
}
.in { align-self: flex-start; background: #fff; }
.out { background: #d8fdd2; }
.out.tail { border-top-right-radius: 0; }
.in.tail { border-top-left-radius: 0; }
.tail::after {
  content: "";
  position: absolute;
  top: 0;
  width: 20px;
  height: 32px;
  background: inherit;
}
.out.tail::after { left: calc(100% - .5px); clip-path: path("M0 0H16Q22 2 18 9L0 31Z"); }
.in.tail::after { right: calc(100% - .5px); clip-path: path("M20 0H4Q-2 2 2 9L20 31Z"); }
.text {
  grid-column: 1;
  grid-row: 2;
  padding: 18px 0 0 28.500px;
  font-size: 50px;
  line-height: 59px;
  white-space: nowrap;
}
.meta {
  grid-column: 1;
  grid-row: 2;
  align-self: end;
  justify-self: end;
  display: flex;
  align-items: center;
  gap: 10px;
  margin: 0 25px 13px 0;
  color: #5b6c61;
  font-size: 39px;
  line-height: 39px;
}
.in .meta { margin: 0 22px 10px 0; color: #5b6368; }
.tick { width: 46px; height: 28px; margin-bottom: 5px; }
.quote {
  grid-row: 1;
  position: relative;
  height: 146px;
  margin: 10px 11px 0;
  padding: 14px 0 0 34.500px;
  border-radius: 23px;
  overflow: hidden;
  display: flex;
  flex-direction: column;
}
.quote::before {
  content: "";
  position: absolute;
  inset: 0 auto 0 0;
  width: 11px;
  background: currentColor;
}
.quote ~ .text { padding-top: 14px; }
.contact { background: #d5f2cf; color: #5e47de; }
.self { background: #f6f5f3; color: #1daa61; }
.name { font-size: 46px; font-weight: 500; line-height: 62px; color: #382f7c; }
.self .name { color: #1b6444; }
.cite { font-size: 45.600px; line-height: 62px; white-space: nowrap; color: #748a77; }
.self .cite { color: #5b6368; }

.cut { width: 823px; height: 75px; border-radius: 0 0 32px 32px; }
.b2 { width: 809px; height: 151px; margin-top: 7px; }
.b3 { width: 782px; height: 250px; margin-top: 29px; }
.b4 { width: 683px; height: 250px; margin-top: 29px; }
.b5 { width: 289px; height: 98px; margin-top: 29px; }
.b6 { width: 871px; height: 308px; margin-top: 7px; }
.b7 { width: 710px; height: 154px; margin-top: 8px; }
.b8 { width: 537px; height: 98px; margin-top: 7px; }
.b9 { width: 871px; height: 157px; margin-top: 30px; }
.day {
  align-self: center;
  width: 164px;
  height: 85px;
  margin-top: 30px;
  border-radius: 20px;
  background: rgba(255, 255, 255, .8);
  box-shadow: 0 2px 1px rgba(60, 50, 30, .09);
  color: #5b6368;
  font-size: 42px;
  font-weight: 500;
  line-height: 88px;
  text-align: center;
}

/* composer */
.composer {
  position: relative;
  margin-top: 25px;
  padding-left: 14px;
  display: flex;
  align-items: flex-start;
  gap: 14px;
}
.field {
  width: 908px;
  height: 130px;
  padding: 4px 0 0 30.500px;
  border-radius: 65px;
  background: #fff;
  box-shadow: 0 2px 3px rgba(0, 0, 0, .22);
  display: flex;
  align-items: center;
}
.sticker { width: 57px; height: 57.300px; }
.placeholder { width: 448px; margin: -2px 0 0 33.500px; color: #5b6368; font-size: 56px; line-height: 66px; }
.clip { width: 36px; height: 57.300px; }
.rupee { width: 57.500px; height: 57.300px; margin-left: 84px; }
.camera { width: 57.500px; height: 52px; margin-left: 66.500px; }
.mic {
  width: 132px;
  height: 132px;
  margin-top: 1px;
  border-radius: 50%;
  background: #1daa61;
  box-shadow: 0 5px 8px rgba(0, 0, 0, .25);
  display: grid;
  place-items: center;
}
.mic svg { width: 40px; height: 54.700px; }

/* system navigation */
.nav {
  flex: none;
  height: 135px;
  padding-left: 219px;
  display: flex;
  align-items: center;
}
.recents { width: 40px; height: 44px; }
.home { width: 44px; height: 44px; margin-left: 260px; }
.goback { width: 26px; height: 46px; margin-left: 268.500px; }
```
